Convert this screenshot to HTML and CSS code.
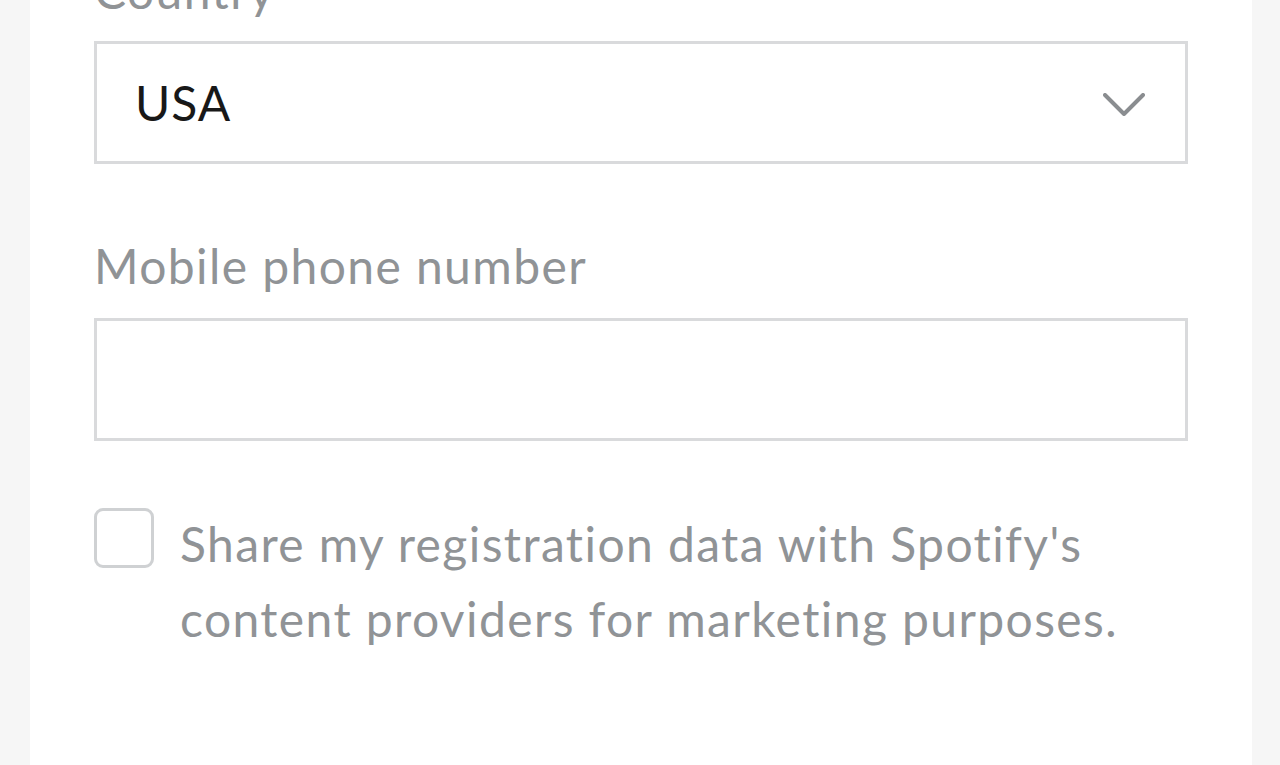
FILE: index.html
```html
<!DOCTYPE html>
<html lang="en">
<head>
<meta charset="utf-8">
<title>Sign up</title>
<link rel="stylesheet" href="styles.css">
</head>
<body>
<div class="page">
  <div class="panel">
    <label class="label label-country">Country</label>
    <div class="select">
      <span class="select-value">USA</span>
      <svg class="chevron" width="42" height="23" viewBox="0 0 42 23" aria-hidden="true">
        <path d="M2 2 L21 21 L40 2" fill="none" stroke="#8a8d90" stroke-width="4" stroke-linecap="round" stroke-linejoin="round"/>
      </svg>
    </div>
    <label class="label label-phone">Mobile phone number</label>
    <div class="input"></div>
    <div class="check-row">
      <span class="checkbox"></span>
      <span class="check-text">Share my registration data with Spotify's content providers for marketing purposes.</span>
    </div>
  </div>
</div>
</body>
</html>
```

FILE: styles.css
```css
html, body {
  margin: 0;
  padding: 0;
}
body {
  font-family: "Lato", "Open Sans", sans-serif;
  background: #f6f6f6;
}
.page {
  height: 765px;
  padding: 0 28px 0 30px;
  overflow: hidden;
}
.panel {
  display: flow-root;
  background: #ffffff;
  height: 100%;
  padding: 0 64px;
}
.label {
  display: block;
  font-size: 48px;
  line-height: 60px;
  letter-spacing: 1.4px;
  color: #909396;
}
.label-country {
  margin-top: -39px;
  margin-bottom: 20px;
}
.label-phone {
  margin-top: 72px;
  margin-bottom: 22px;
}
.select,
.input {
  box-sizing: border-box;
  height: 123px;
  border: 3px solid #d9dadc;
  background: #fff;
}
.select {
  display: flex;
  align-items: center;
  justify-content: space-between;
  padding: 0 40px 0 38px;
}
.select-value {
  font-size: 48px;
  line-height: 60px;
  letter-spacing: 1px;
  color: #181818;
}
.chevron {
  margin-top: 4px;
}
.check-row {
  display: flex;
  align-items: flex-start;
  margin-top: 67px;
}
.checkbox {
  flex: none;
  box-sizing: border-box;
  width: 60px;
  height: 60px;
  border: 3px solid #cfd1d3;
  border-radius: 9px;
}
.check-text {
  margin-left: 26px;
  margin-top: -2px;
  font-size: 48px;
  line-height: 75px;
  letter-spacing: 1.4px;
  color: #909396;
}
```
